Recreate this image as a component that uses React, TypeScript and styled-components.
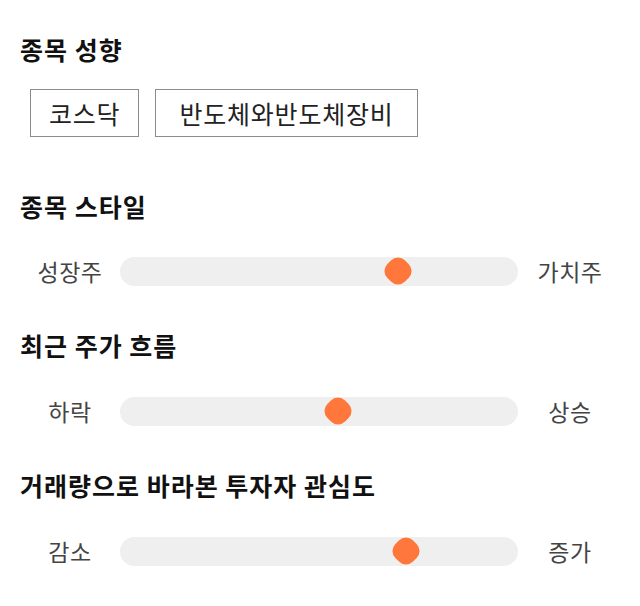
import React from "react";
import styled, { createGlobalStyle } from "styled-components";

const Global = createGlobalStyle`
  html, body { margin: 0; padding: 0; background: #ffffff; }
  body { font-family: "Noto Sans CJK KR", "Noto Sans", sans-serif; }
`;

const Page = styled.div`
  width: 640px;
  box-sizing: border-box;
  padding: 33px 20px 0 20px;
  display: flex;
  flex-direction: column;
`;

const Section = styled.section<{ $gap: number; $mt: number }>`
  display: flex;
  flex-direction: column;
  gap: ${(p) => p.$gap}px;
  margin-top: ${(p) => p.$mt}px;
`;

const Heading = styled.h2`
  margin: 0;
  height: 32px;
  line-height: 32px;
  font-size: 25px;
  font-weight: 700;
  color: #111111;
  letter-spacing: 1px;
`;

const TagList = styled.div`
  display: flex;
  gap: 16px;
  padding-left: 10px;
`;

const Tag = styled.div<{ $pad: number }>`
  height: 48px;
  box-sizing: border-box;
  border: 1px solid #8c8c8c;
  padding: 0 ${(p) => p.$pad}px;
  display: flex;
  align-items: center;
  font-size: 25px;
  letter-spacing: 0.8px;
  color: #222222;
`;

const Row = styled.div`
  display: flex;
  align-items: center;
  height: 30px;
`;

const Label = styled.div`
  width: 100px;
  flex: none;
  text-align: center;
  font-size: 23px;
  letter-spacing: 0.5px;
  color: #444444;
  line-height: 30px;
`;

const Track = styled.div`
  position: relative;
  flex: 1;
  height: 29px;
  margin-right: 2px;
  border-radius: 15px;
  background: #efefef;
`;

const Thumb = styled.div`
  position: absolute;
  top: 50%;
  width: 25px;
  height: 25px;
  border-radius: 10px;
  background: #ff773b;
  transform: translate(-50%, -50%) rotate(45deg);
`;

type SliderProps = { left: string; right: string; value: number };

const Slider = ({ left, right, value }: SliderProps) => (
  <Row>
    <Label>{left}</Label>
    <Track>
      <Thumb style={{ left: `${value}%` }} />
    </Track>
    <Label>{right}</Label>
  </Row>
);

export default function App() {
  return (
    <>
      <Global />
      <Page>
        <Section $gap={24} $mt={0}>
          <Heading>종목 성향</Heading>
          <TagList>
            <Tag $pad={18}>코스닥</Tag>
            <Tag $pad={23}>반도체와반도체장비</Tag>
          </TagList>
        </Section>
        <Section $gap={34} $mt={53}>
          <Heading>종목 스타일</Heading>
          <Slider left="성장주" right="가치주" value={69.8} />
        </Section>
        <Section $gap={35} $mt={43}>
          <Heading>최근 주가 흐름</Heading>
          <Slider left="하락" right="상승" value={54.7} />
        </Section>
        <Section $gap={35} $mt={43}>
          <Heading>거래량으로 바라본 투자자 관심도</Heading>
          <Slider left="감소" right="증가" value={71.8} />
        </Section>
      </Page>
    </>
  );
}
